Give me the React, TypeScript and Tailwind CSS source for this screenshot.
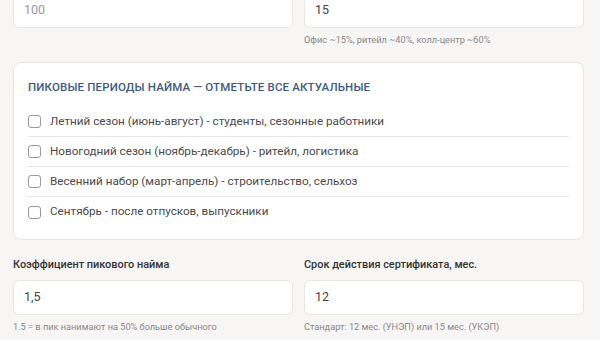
const periods = [
  "Летний сезон (июнь-август) - студенты, сезонные работники",
  "Новогодний сезон (ноябрь-декабрь) - ритейл, логистика",
  "Весенний набор (март-апрель) - строительство, сельхоз",
  "Сентябрь - после отпусков, выпускники",
];

function Field({ label, value, hint, muted }: { label?: string; value: string; hint?: string; muted?: boolean }) {
  return (
    <div className="flex flex-col">
      {label && <label className="mb-[7px] text-[10.9px] font-medium leading-[16px] text-[#333]">{label}</label>}
      <div
        className={`flex h-[35px] items-center rounded-[6px] border border-[#e8e6e3] bg-white px-[10px] text-[12.5px] ${
          muted ? "text-[#999]" : "text-[#444]"
        }`}
      >
        {value}
      </div>
      {hint && <p className="mt-[5px] text-[9.2px] leading-[13px] text-[#888]">{hint}</p>}
    </div>
  );
}

export default function App() {
  return (
    <div
      className="h-[340px] overflow-hidden bg-[#f7f6f4] pl-[13px] pr-[16px]"
      style={{ fontFamily: 'Roboto, "Noto Sans", sans-serif' }}
    >
      <div className="-mt-[7px] grid grid-cols-2 gap-x-[11px]">
        <Field value="100" muted />
        <Field value="15" hint="Офис ~15%, ритейл ~40%, колл-центр ~60%" />
      </div>

      <section className="mt-[16px] rounded-[8px] border border-[#e8e6e3] bg-white px-[14px] pb-[12px] pt-[16px]">
        <h3 className="text-[11.5px] font-medium uppercase leading-[16px] tracking-[0.15px] text-[#3d5a80]">
          Пиковые периоды найма — отметьте все актуальные
        </h3>
        <div className="mt-[12px] flex flex-col">
          {periods.map((p, i) => (
            <label
              key={p}
              className={`flex h-[30px] items-center gap-[9px] text-[11.7px] text-[#4a4a4a] ${
                i < periods.length - 1 ? "border-b border-[#e8e6e3]" : ""
              }`}
            >
              <span className="h-[13px] w-[13px] shrink-0 rounded-[3px] border border-[#999] bg-white" />
              {p}
            </label>
          ))}
        </div>
      </section>

      <div className="mt-[17px] grid grid-cols-2 gap-x-[11px]">
        <Field label="Коэффициент пикового найма" value="1,5" hint="1.5 = в пик нанимают на 50% больше обычного" />
        <Field label="Срок действия сертификата, мес." value="12" hint="Стандарт: 12 мес. (УНЭП) или 15 мес. (УКЭП)" />
      </div>
    </div>
  );
}
